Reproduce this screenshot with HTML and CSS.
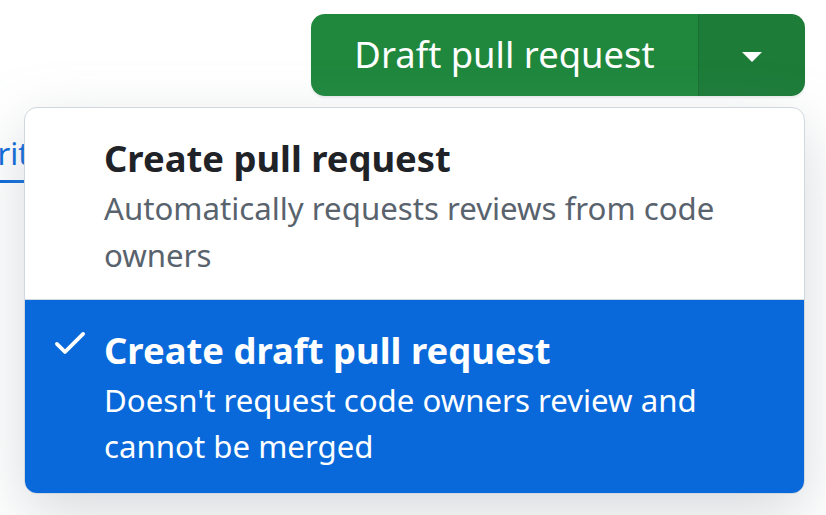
FILE: index.html
```html
<!DOCTYPE html>
<html lang="en">
<head>
<meta charset="utf-8">
<title>Draft pull request</title>
<link rel="stylesheet" href="styles.css">
</head>
<body>
<div class="page">
  <div class="toolbar">
    <div class="split-button">
      <button class="main-action">Draft pull request</button>
      <button class="caret-action" aria-label="Select pull request type"><span class="caret"></span></button>
    </div>
  </div>
  <div class="under-row">
    <a class="tab-link" href="#">Write</a>
  </div>
  <div class="menu" role="menu">
    <div class="menu-item">
      <span class="leading"></span>
      <div class="item-text">
        <div class="item-title">Create pull request</div>
        <div class="item-desc">Automatically requests reviews from code owners</div>
      </div>
    </div>
    <div class="menu-item selected">
      <span class="leading">
        <svg viewBox="0 0 16 16" width="40" height="40" aria-hidden="true"><path fill="currentColor" d="M13.78 4.22a.75.75 0 0 1 0 1.06l-7.25 7.25a.75.75 0 0 1-1.06 0L2.22 9.280a.751.751 0 0 1 .018-1.042.751.751 0 0 1 1.042-.018L6 10.94l6.72-6.72a.75.75 0 0 1 1.06 0Z"/></svg>
      </span>
      <div class="item-text">
        <div class="item-title">Create draft pull request</div>
        <div class="item-desc">Doesn't request code owners review and cannot be merged</div>
      </div>
    </div>
  </div>
</div>
</body>
</html>
```
FILE: styles.css
```css
* { box-sizing: border-box; }
html, body { margin: 0; padding: 0; background: #ffffff; }
body {
  font-family: "Noto Sans", "Open Sans", sans-serif;
  width: 826px;
  height: 515px;
  overflow: hidden;
}
.page {
  position: relative;
  width: 826px;
  height: 515px;
}
.toolbar {
  display: flex;
  justify-content: flex-end;
  padding: 14px 21px 0 0;
}
.split-button {
  display: flex;
  height: 82px;
  border-radius: 14px;
  overflow: hidden;
  box-shadow: 0 2px 2px rgba(31, 35, 40, 0.08);
}
.split-button button {
  border: none;
  margin: 0;
  font-family: inherit;
  color: #ffffff;
  cursor: pointer;
}
.main-action {
  width: 388px;
  background: #1f883d;
  font-size: 36.4px;
  font-weight: 400;
  padding: 0 0 2px;
  border-right: 1px solid #1a6f33 !important;
}
.caret-action {
  width: 106px;
  background: #1c7c38;
  display: flex;
  align-items: center;
  justify-content: center;
  padding: 0;
}
.caret {
  width: 0;
  height: 0;
  border-left: 10px solid transparent;
  border-right: 10px solid transparent;
  border-top: 10px solid #ffffff;
  margin-top: 4px;
}
.under-row {
  padding-top: 37px;
  margin-left: -31px;
}
.tab-link {
  font-size: 31px;
  color: #0969da;
  text-decoration: none;
  display: inline-block;
  line-height: 40px;
  padding-bottom: 7px;
  border-bottom: 3px solid #0969da;
}
.menu {
  position: absolute;
  left: 24px;
  top: 107px;
  width: 781px;
  border: 1px solid #d0d7de;
  border-radius: 13px;
  background: #ffffff;
  overflow: hidden;
  box-shadow: 0 20px 60px rgba(140, 149, 159, 0.35);
}
.menu-item {
  display: flex;
  gap: 14px;
  padding: 27px 40px 20px 25px;
  color: #1f2328;
}
.menu-item + .menu-item {
  border-top: 1px solid #d0d7de;
}
.menu-item.selected {
  background: #0969da;
  color: #ffffff;
  padding-top: 27px;
  padding-bottom: 23px;
}
.leading {
  flex: 0 0 40px;
  width: 40px;
  height: 40px;
  margin-top: -5px;
  color: #ffffff;
}
.leading svg { display: block; }
.item-text { flex: 1; }
.item-title {
  font-size: 36.4px;
  font-weight: 700;
  line-height: 46px;
}
.item-desc {
  font-size: 31.2px;
  line-height: 46.8px;
  margin-top: 4px;
  color: #59636e;
}
.selected .item-desc { color: #ffffff; }
```
